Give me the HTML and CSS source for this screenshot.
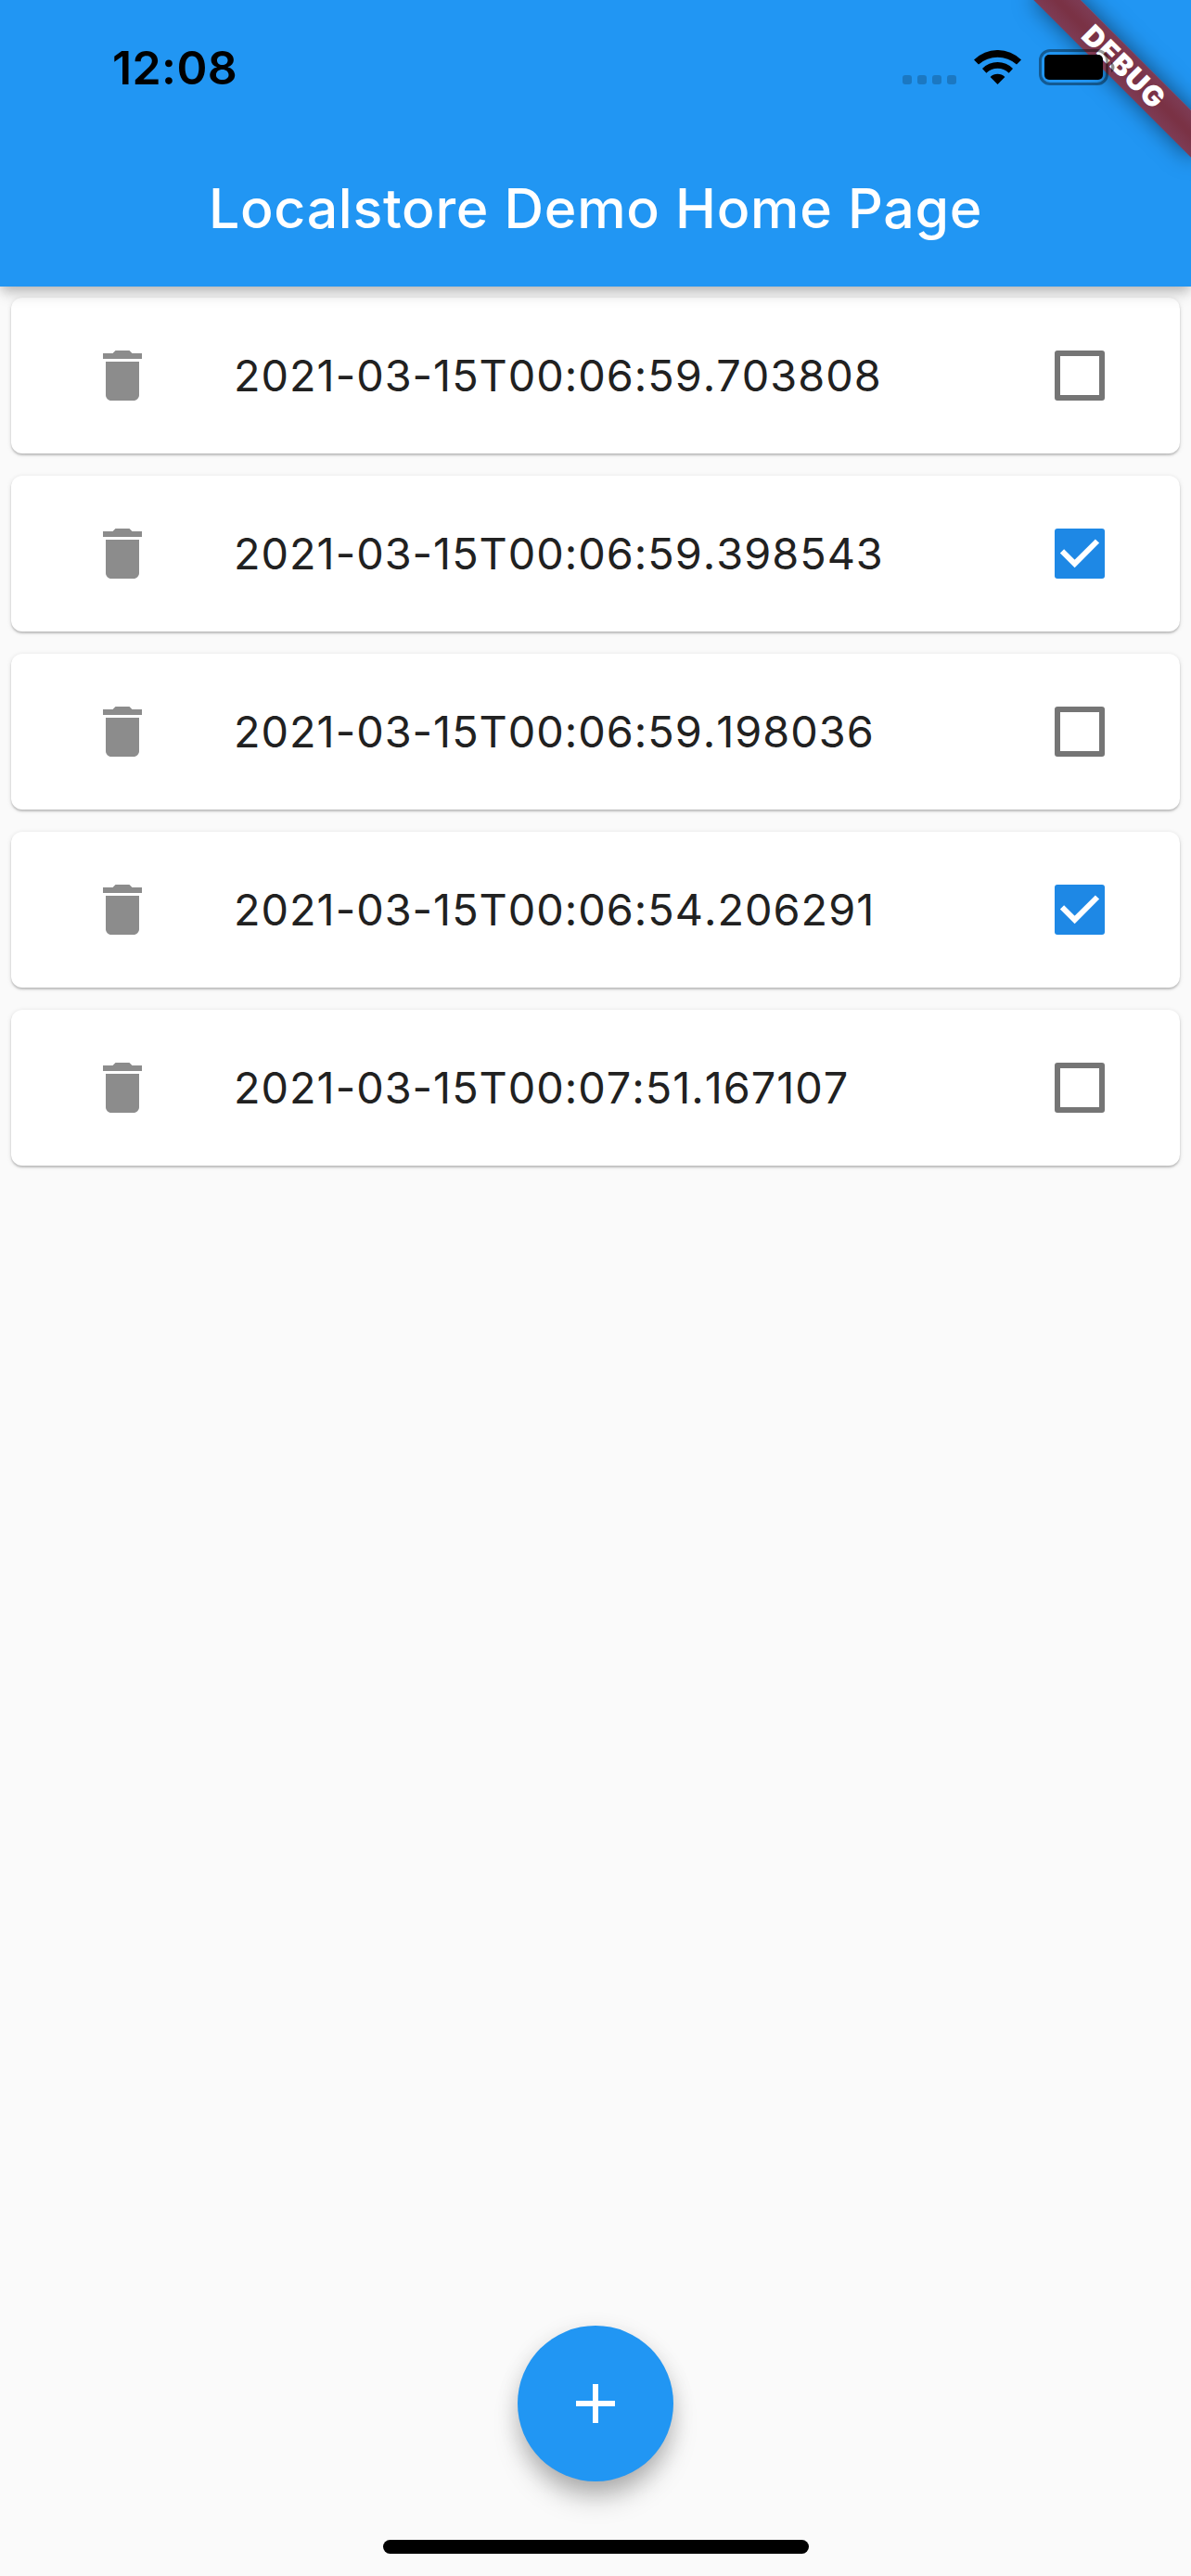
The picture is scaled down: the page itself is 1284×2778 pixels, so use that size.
FILE: index.html
```html
<!DOCTYPE html>
<html lang="en">
<head>
<meta charset="utf-8">
<title>Localstore Demo</title>
<link rel="stylesheet" href="styles.css">
</head>
<body>
<svg class="defs" aria-hidden="true">
  <symbol id="trash" viewBox="0 0 24 24"><path d="M6 19c0 1.1.9 2 2 2h8c1.1 0 2-.9 2-2V7H6v12zM19 4h-3.500l-1-1h-5l-1 1H5v2h14V4z"/></symbol>
  <symbol id="check" viewBox="0 0 54 54"><path d="M8 24.300 21.600 37.900 46 13.500" fill="none" stroke="#fff" stroke-width="6"/></symbol>
</svg>
<div class="app">
  <header class="header">
    <div class="status">
      <span class="time">12:08</span>
      <div class="indicators">
        <div class="signal"><i></i><i></i><i></i><i></i></div>
        <svg class="wifi" viewBox="0 0 51 37">
          <path d="M0 10.500A36.200 36.200 0 0 1 51 10.500L46 15.500A31 31 0 0 0 5 15.500Z"/>
          <path d="M9 20A23 23 0 0 1 42 20L37.600 24.700A17.400 17.400 0 0 0 13.400 24.700Z"/>
          <path d="M17.600 29A11.500 11.500 0 0 1 33.400 29L25.500 37Z"/>
        </svg>
        <svg class="battery" viewBox="0 0 81 39">
          <rect x="1.500" y="1.500" width="72" height="36" rx="10.500" fill="none" stroke="#000" stroke-opacity=".4" stroke-width="3"/>
          <rect x="6" y="6" width="63" height="27" rx="5"/>
          <path d="M78 14q3.500 2 3.500 5.500t-3.500 5.500z" fill-opacity=".45"/>
        </svg>
      </div>
    </div>
    <h1 class="title">Localstore Demo Home Page</h1>
    <div class="corner"><div class="banner"><span>DEBUG</span></div></div>
  </header>
  <main class="list">
    <div class="card"><svg class="trash"><use href="#trash"/></svg><span class="stamp">2021-03-15T00:06:59.703808</span><span class="box"></span></div>
    <div class="card"><svg class="trash"><use href="#trash"/></svg><span class="stamp">2021-03-15T00:06:59.398543</span><span class="box checked"><svg><use href="#check"/></svg></span></div>
    <div class="card"><svg class="trash"><use href="#trash"/></svg><span class="stamp">2021-03-15T00:06:59.198036</span><span class="box"></span></div>
    <div class="card"><svg class="trash"><use href="#trash"/></svg><span class="stamp">2021-03-15T00:06:54.206291</span><span class="box checked"><svg><use href="#check"/></svg></span></div>
    <div class="card"><svg class="trash"><use href="#trash"/></svg><span class="stamp">2021-03-15T00:07:51.167107</span><span class="box"></span></div>
  </main>
  <footer class="footer">
    <button class="fab" aria-label="Add"><svg viewBox="0 0 24 24"><path d="M19 13h-6v6h-2v-6H5v-2h6V5h2v6h6v2z"/></svg></button>
    <div class="home"></div>
  </footer>
</div>
</body>
</html>
```
FILE: styles.css
```css
* { box-sizing: border-box; }
body {
  margin: 0;
  background: #fafafa;
  font-family: Inter, "Liberation Sans", sans-serif;
}
.defs { display: none; }
.app {
  width: 1284px;
  height: 2778px;
  display: flex;
  flex-direction: column;
  overflow: hidden;
}
.header {
  position: relative;
  z-index: 1;
  flex: none;
  height: 309px;
  background: #2196f3;
  box-shadow: 0 12px 15px -3px rgba(0,0,0,.12), 0 3px 12px rgba(0,0,0,.2);
}
.status {
  height: 141px;
  padding: 0 83px 0 121px;
  display: flex;
  justify-content: space-between;
}
.time {
  margin-top: 42px;
  font-size: 50px;
  line-height: 62px;
  font-weight: 600;
  letter-spacing: .4px;
}
.indicators { display: flex; margin-top: 53px; }
.signal {
  display: flex;
  gap: 6px;
  margin: 28px 19px 0 0;
}
.signal i {
  width: 10px;
  height: 10px;
  border-radius: 3px;
  background: #1b78c2;
}
.wifi { width: 51px; height: 37px; margin: 1px 19px 0 0; }
.battery { width: 81px; height: 39px; position: relative; z-index: 2; overflow: visible; }
.title {
  margin: 0;
  height: 168px;
  line-height: 168px;
  text-align: center;
  color: #fff;
  font-size: 59px;
  font-weight: 500;
  letter-spacing: .7px;
  white-space: nowrap;
}
.corner {
  position: absolute;
  top: 0;
  right: 0;
  width: 240px;
  height: 240px;
  overflow: hidden;
}
.banner {
  position: absolute;
  left: 120px;
  top: 84px;
  width: 240px;
  height: 36px;
  transform-origin: 120px -84px;
  transform: rotate(45deg);
  background: linear-gradient(#7d3c55, #7a3245 45%, #7a3245 55%, #7d3c55);
  box-shadow: 0 0 24px rgba(0,0,0,.5);
  color: #fff;
  font-size: 30.600px;
  font-weight: 900;
  letter-spacing: 1.200px;
  line-height: 36px;
  text-align: center;
}
.list {
  padding: 12px;
  display: flex;
  flex-direction: column;
  gap: 24px;
}
.card {
  height: 168px;
  padding: 0 81px 0 84px;
  border-radius: 12px;
  background: #fff;
  display: flex;
  align-items: center;
  box-shadow: 0 2px 2px rgba(0,0,0,.18), 0 1px 5px rgba(0,0,0,.13);
}
.trash { width: 72px; height: 72px; fill: #8c8c8c; }
.stamp {
  flex: 1;
  margin-left: 84px;
  color: #212121;
  font-size: 46.800px;
  font-weight: 380;
  line-height: 60px;
  letter-spacing: 1px;
  font-kerning: none;
  white-space: nowrap;
}
.box {
  width: 54px;
  height: 54px;
  border: 6px solid #757575;
  border-radius: 3px;
}
.box.checked { border: 0; background: #1e88e5; }
.box svg { display: block; width: 54px; height: 54px; }
.footer {
  margin-top: auto;
  padding-bottom: 24px;
  display: flex;
  flex-direction: column;
  align-items: center;
  gap: 63px;
}
.fab {
  width: 168px;
  height: 168px;
  padding: 0;
  border: 0;
  border-radius: 50%;
  background: #2196f3;
  display: grid;
  place-items: center;
  box-shadow: 0 21px 30px -5px rgba(0,0,0,.26), 0 6px 24px rgba(0,0,0,.12);
}
.fab svg { width: 72px; height: 72px; fill: #fff; }
.home { width: 459px; height: 15px; border-radius: 8px; background: #000; }
```
